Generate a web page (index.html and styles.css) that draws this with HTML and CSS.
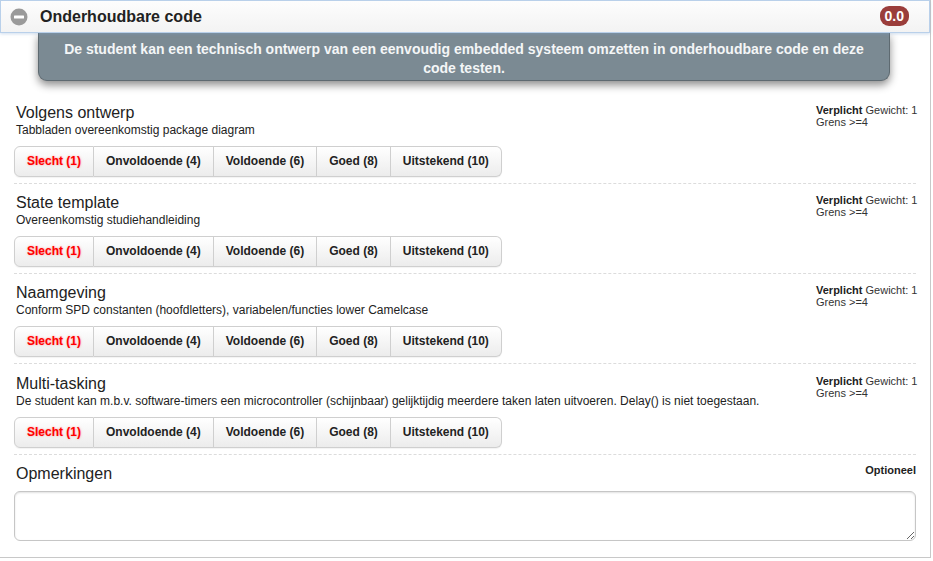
FILE: index.html
```html
<!DOCTYPE html>
<html lang="nl">
<head>
<meta charset="utf-8">
<title>Onderhoudbare code</title>
<link rel="stylesheet" href="styles.css">
</head>
<body>
<div class="page">
  <div class="header">
    <span class="toggle"><svg width="18" height="18" viewBox="0 0 18 18"><circle cx="9" cy="9" r="8.5" fill="#9a9a9a"/><rect x="4" y="7.5" width="10" height="3" rx="0.5" fill="#fff"/></svg></span>
    <span class="title">Onderhoudbare code</span>
    <span class="badge">0.0</span>
  </div>
  <div class="goal">De student kan een technisch ontwerp van een eenvoudig embedded systeem omzetten in onderhoudbare code en deze code testen.</div>
  <div class="criteria">
    <div class="criterion">
      <div class="meta"><b>Verplicht</b> Gewicht: 1<br>Grens &gt;=4</div>
      <div class="c-title">Volgens ontwerp</div>
      <div class="c-desc">Tabbladen overeenkomstig package diagram</div>
      <div class="btn-group">
        <span class="btn active">Slecht (1)</span><span class="btn">Onvoldoende (4)</span><span class="btn">Voldoende (6)</span><span class="btn">Goed (8)</span><span class="btn">Uitstekend (10)</span>
      </div>
    </div>
    <div class="criterion">
      <div class="meta"><b>Verplicht</b> Gewicht: 1<br>Grens &gt;=4</div>
      <div class="c-title">State template</div>
      <div class="c-desc">Overeenkomstig studiehandleiding</div>
      <div class="btn-group">
        <span class="btn active">Slecht (1)</span><span class="btn">Onvoldoende (4)</span><span class="btn">Voldoende (6)</span><span class="btn">Goed (8)</span><span class="btn">Uitstekend (10)</span>
      </div>
    </div>
    <div class="criterion">
      <div class="meta"><b>Verplicht</b> Gewicht: 1<br>Grens &gt;=4</div>
      <div class="c-title">Naamgeving</div>
      <div class="c-desc">Conform SPD constanten (hoofdletters), variabelen/functies lower Camelcase</div>
      <div class="btn-group">
        <span class="btn active">Slecht (1)</span><span class="btn">Onvoldoende (4)</span><span class="btn">Voldoende (6)</span><span class="btn">Goed (8)</span><span class="btn">Uitstekend (10)</span>
      </div>
    </div>
    <div class="criterion">
      <div class="meta"><b>Verplicht</b> Gewicht: 1<br>Grens &gt;=4</div>
      <div class="c-title">Multi-tasking</div>
      <div class="c-desc">De student kan m.b.v. software-timers een microcontroller (schijnbaar) gelijktijdig meerdere taken laten uitvoeren. Delay() is niet toegestaan.</div>
      <div class="btn-group">
        <span class="btn active">Slecht (1)</span><span class="btn">Onvoldoende (4)</span><span class="btn">Voldoende (6)</span><span class="btn">Goed (8)</span><span class="btn">Uitstekend (10)</span>
      </div>
    </div>
    <div class="remarks">
      <div class="optional">Optioneel</div>
      <div class="c-title">Opmerkingen</div>
      <textarea class="remarks-input"></textarea>
    </div>
  </div>
</div>
</body>
</html>
```
FILE: styles.css
```css
html, body {
  margin: 0;
  padding: 0;
  background: #fff;
}
body {
  font-family: "Liberation Sans", Arial, Helvetica, sans-serif;
  color: #333;
}
.page {
  width: 930px;
  height: 557px;
  border-right: 1px solid #c8c8c8;
  border-bottom: 1px solid #c8c8c8;
  position: relative;
}
.header {
  height: 31px;
  border: 1px solid #b9d0ea;
  background: linear-gradient(#fdfdfd, #f3f3f3);
  box-shadow: 0 1px 3px rgba(120,160,210,0.35);
  display: flex;
  align-items: center;
  padding: 0 20px 0 9px;
  position: relative;
  z-index: 2;
}
.toggle {
  display: flex;
  width: 18px;
  height: 18px;
  margin-top: 1px;
}
.title {
  font-size: 16px;
  font-weight: bold;
  color: #222;
  margin-left: 12px;
  flex: 1;
}
.badge {
  background: #9a3d3b;
  color: #fff;
  font-weight: bold;
  font-size: 14px;
  line-height: 20px;
  padding: 0 5px;
  border-radius: 9px;
  margin-top: -2px;
}
.goal {
  margin: 0 40px 0 38px;
  background: #7b8a93;
  border: 1px solid #5e6a71;
  border-top: none;
  border-radius: 0 0 9px 9px;
  box-shadow: 0 4px 9px rgba(0,0,0,0.45);
  color: #f4f6f7;
  font-weight: bold;
  font-size: 14px;
  line-height: 19px;
  text-align: center;
  padding: 7px 18px 2px;
  position: relative;
  z-index: 1;
}
.criteria {
  padding: 13px 14px 0 14px;
}
.criterion {
  padding: 9px 0 6px;
  border-bottom: 1px dashed #dcdcdc;
}
.criterion:nth-child(4) {
  padding-top: 10px;
}
.meta {
  float: right;
  font-size: 11px;
  line-height: 12px;
  color: #333;
  margin-top: 1px;
  width: 100px;
  white-space: nowrap;
}
.meta b {
  color: #222;
}
.c-title {
  font-size: 16px;
  line-height: 20px;
  color: #222;
  padding-left: 2px;
}
.c-desc {
  font-size: 12px;
  line-height: 14px;
  color: #222;
  padding-left: 2px;
}
.btn-group {
  display: inline-flex;
  margin-top: 9px;
  border-radius: 6px;
  box-shadow: 0 1px 1px rgba(0,0,0,0.05);
}
.btn {
  font-size: 12px;
  font-weight: bold;
  line-height: 17px;
  padding: 6px 12px 6px 12px;
  color: #222;
  background: linear-gradient(#ffffff, #ececec);
  border: 1px solid #cfcfcf;
  border-left: none;
}
.btn:first-child {
  border-left: 1px solid #cfcfcf;
  border-radius: 6px 0 0 6px;
}
.btn:last-child {
  border-radius: 0 6px 6px 0;
}
.btn.active {
  color: #f00;
  text-shadow: 0 0 2px rgba(255,80,80,0.6);
}
.remarks {
  padding: 9px 0 0;
}
.optional {
  float: right;
  font-size: 11px;
  font-weight: bold;
  color: #222;
  line-height: 12px;
  margin-top: 0;
}
.remarks-input {
  display: block;
  box-sizing: border-box;
  width: 902px;
  height: 50px;
  margin-top: 7px;
  border: 1px solid #c6c6c6;
  border-radius: 6px;
  box-shadow: inset 0 1px 2px rgba(0,0,0,0.12);
  font-family: inherit;
  resize: vertical;
}
```
